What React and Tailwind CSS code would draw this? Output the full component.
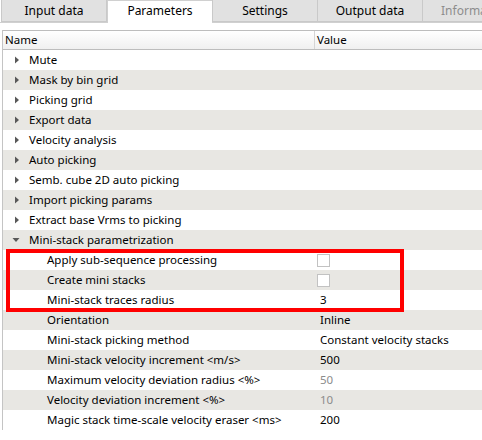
const tabs = [
  { label: 'Input data', w: 'w-[106px]' },
  { label: 'Parameters', w: 'w-[106px]', active: true },
  { label: 'Settings', w: 'w-[106px]' },
  { label: 'Output data', w: 'w-[106px]' },
  { label: 'Information', w: 'w-[106px]', disabled: true },
];

const groups = [
  'Mute',
  'Mask by bin grid',
  'Picking grid',
  'Export data',
  'Velocity analysis',
  'Auto picking',
  'Semb. cube 2D auto picking',
  'Import picking params',
  'Extract base Vrms to picking',
];

const miniStack = [
  { name: 'Apply sub-sequence processing', check: true },
  { name: 'Create mini stacks', check: true },
  { name: 'Mini-stack traces radius', value: '3' },
  { name: 'Orientation', value: 'Inline' },
  { name: 'Mini-stack picking method', value: 'Constant velocity stacks' },
  { name: 'Mini-stack velocity increment <m/s>', value: '500' },
  { name: 'Maximum velocity deviation radius <%>', value: '50', dim: true },
  { name: 'Velocity deviation increment <%>', value: '10', dim: true },
  { name: 'Magic stack time-scale velocity eraser <ms>', value: '200' },
];

function Arrow({ open }) {
  if (open) {
    return (
      <svg width="8" height="8" viewBox="0 0 8 8" className="ml-[9px] mr-[9px]">
        <path d="M0.5 2 L7.5 2 L4 6 Z" fill="#595959" />
      </svg>
    );
  }
  return (
    <svg width="8" height="8" viewBox="0 0 8 8" className="ml-[10px] mr-[8px]">
      <path d="M2 0.5 L6 4 L2 7.5 Z" fill="#595959" />
    </svg>
  );
}

function Row({ index, children, value }) {
  const bg = index % 2 === 1 ? 'bg-[#e8e7e3]' : 'bg-white';
  return (
    <div className={`flex h-[20px] items-center ${bg}`}>
      <div className="flex w-[312px] items-center">{children}</div>
      <div className="flex flex-1 items-center pl-[5px]">{value}</div>
    </div>
  );
}

export default function App() {
  let idx = 0;
  return (
    <div
      className="relative h-[440px] w-[482px] overflow-hidden bg-white text-[11.5px] text-black"
      style={{ fontFamily: '"Noto Sans", "Open Sans", sans-serif' }}
    >
      {/* tab strip */}
      <div className="flex h-[23px] items-end border-b border-[#d0d0d0] pl-[2px]">
        {tabs.map((t) =>
          t.active ? (
            <div
              key={t.label}
              className={`${t.w} -mb-px flex h-[23px] shrink-0 items-center justify-center border border-b-0 border-[#d0d0d0] bg-white pb-[3px] text-[12px]`}
            >
              {t.label}
            </div>
          ) : (
            <div
              key={t.label}
              className={`${t.w} -ml-px flex h-[23px] shrink-0 items-center justify-center border border-[#c9c9c9] bg-[#e1e1e1] pt-[1px] text-[12px] ${
                t.disabled ? 'text-[#8d8d8d]' : ''
              }`}
            >
              {t.label}
            </div>
          )
        )}
      </div>

      {/* property tree */}
      <div className="ml-[2px] mt-[7px] border-l border-[#c4c4c4]">
        <div className="flex h-[20px] items-center border-y border-[#bdbdbd] bg-gradient-to-b from-white to-[#f0f0f0]">
          <div className="w-[312px] border-r border-[#d5d5d5] pl-[2px] leading-[18px]">Name</div>
          <div className="pl-[2px]">Value</div>
        </div>

        {groups.map((g) => (
          <Row key={g} index={idx++}>
            <Arrow />
            <span>{g}</span>
          </Row>
        ))}

        <Row index={idx++}>
          <Arrow open />
          <span>Mini-stack parametrization</span>
        </Row>

        {miniStack.map((p) => (
          <Row
            key={p.name}
            index={idx++}
            value={
              p.check ? (
                <span className="ml-[-3px] block h-[13px] w-[13px] border border-[#c2c2c2] bg-white" />
              ) : (
                <span className={p.dim ? 'text-[#8c8c8c]' : ''}>{p.value}</span>
              )
            }
          >
            <span className="pl-[44px]">{p.name}</span>
          </Row>
        ))}
      </div>

      {/* highlight frame */}
      <div className="pointer-events-none absolute left-[6px] top-[249px] h-[63px] w-[398px] border-[4px] border-[#ff0000]" />
    </div>
  );
}
